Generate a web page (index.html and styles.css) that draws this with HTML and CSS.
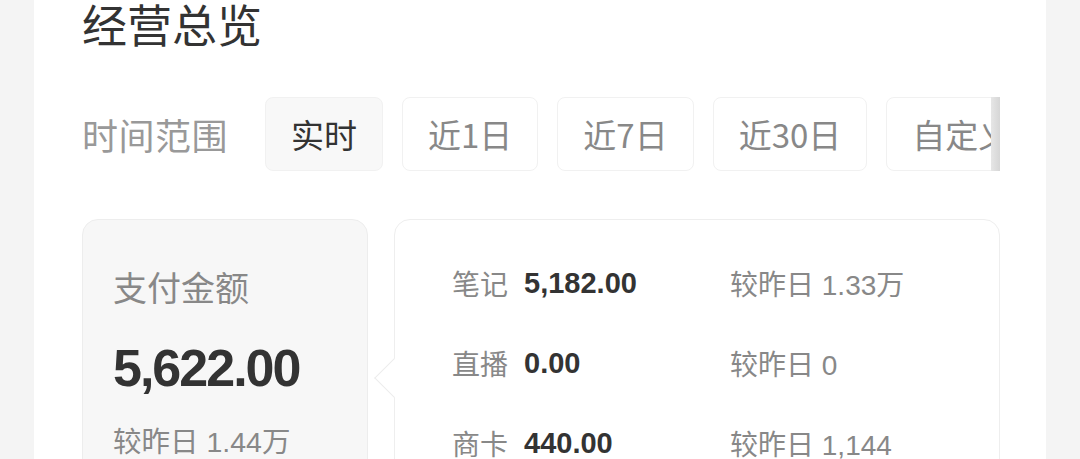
FILE: index.html
```html
<!DOCTYPE html>
<html lang="zh-CN">
<head>
<meta charset="utf-8">
<title>经营总览</title>
<link rel="stylesheet" href="styles.css">
</head>
<body>
<main class="panel">
  <h1 class="title">经营总览</h1>
  <div class="range">
    <span class="range-label">时间范围</span>
    <div class="tabs">
      <span class="tab active">实时</span>
      <span class="tab">近1日</span>
      <span class="tab">近7日</span>
      <span class="tab">近30日</span>
      <span class="tab">自定义</span>
    </div>
  </div>
  <div class="cards">
    <section class="summary">
      <div class="sum-label">支付金额</div>
      <div class="sum-value">5,622.00</div>
      <div class="sum-compare">较昨日 1.44万</div>
    </section>
    <section class="detail">
      <div class="row"><span class="lbl">笔记</span><span class="val">5,182.00</span></div>
      <div class="cmp">较昨日 1.33万</div>
      <div class="row"><span class="lbl">直播</span><span class="val">0.00</span></div>
      <div class="cmp">较昨日 0</div>
      <div class="row"><span class="lbl">商卡</span><span class="val">440.00</span></div>
      <div class="cmp">较昨日 1,144</div>
    </section>
  </div>
</main>
</body>
</html>
```
FILE: styles.css
```css
html, body {
  margin: 0;
  padding: 0;
}
body {
  width: 1080px;
  height: 459px;
  overflow: hidden;
  background: #f4f4f4;
  padding: 0 34px;
  box-sizing: border-box;
  font-family: "Liberation Sans", "Noto Sans CJK SC", sans-serif;
}
.panel {
  background: #fff;
  height: 459px;
  padding: 0 46px 0 48px;
  box-sizing: border-box;
}
.title {
  margin: 0;
  font-family: "Noto Sans CJK SC", sans-serif;
  font-weight: 400;
  font-size: 45px;
  line-height: 48px;
  color: #333;
}
.range {
  display: flex;
  align-items: center;
  margin-top: 49px;
  gap: 37px;
}
.range-label {
  font-family: "Noto Sans CJK SC", sans-serif;
  font-size: 36px;
  letter-spacing: 0.5px;
  color: #999;
  white-space: nowrap;
}
.tabs {
  position: relative;
  flex: 1;
  display: flex;
  gap: 19px;
  overflow: hidden;
}
.tabs::after {
  content: "";
  position: absolute;
  right: 0;
  top: 0;
  width: 9px;
  height: 74px;
  background: linear-gradient(to right, #e6e6e6, #d6d6d6);
}
.tab {
  flex: none;
  height: 74px;
  padding: 0 25px;
  box-sizing: border-box;
  display: flex;
  align-items: center;
  border: 1px solid #f1f1f1;
  border-radius: 8px;
  background: #fff;
  font-family: "Noto Sans CJK SC", sans-serif;
  font-size: 33px;
  color: #888;
}
.tab.active {
  background: #f8f8f8;
  color: #333;
}
.cards {
  display: flex;
  gap: 26px;
  margin-top: 48px;
}
.summary {
  width: 286px;
  height: 300px;
  box-sizing: border-box;
  background: #f7f7f7;
  border: 1px solid #ededed;
  border-radius: 16px;
  padding: 47px 0 0 30px;
}
.sum-label {
  font-family: "Noto Sans CJK SC", sans-serif;
  font-size: 34px;
  line-height: 40px;
  color: #888;
}
.sum-value {
  margin-top: 31px;
  font-size: 52px;
  line-height: 60px;
  font-weight: 700;
  letter-spacing: -2px;
  color: #333;
}
.sum-compare {
  margin-top: 26px;
  font-size: 28.5px;
  line-height: 36px;
  color: #888;
}
.detail {
  position: relative;
  width: 606px;
  height: 300px;
  box-sizing: border-box;
  background: #fff;
  border: 1px solid #eeeeee;
  border-radius: 16px;
  padding: 23px 0 0 57px;
  display: grid;
  grid-template-columns: 278px 1fr;
  grid-auto-rows: 80px;
  align-items: center;
}
.detail::before {
  content: "";
  position: absolute;
  left: -15px;
  top: 144px;
  width: 27px;
  height: 27px;
  background: #fff;
  border-left: 1px solid #ececec;
  border-bottom: 1px solid #ececec;
  transform: rotate(45deg);
}
.row {
  display: flex;
  align-items: center;
}
.lbl {
  font-family: "Noto Sans CJK SC", sans-serif;
  font-size: 28px;
  color: #888;
}
.val {
  margin-left: 16px;
  font-size: 29px;
  font-weight: 700;
  color: #333;
}
.cmp {
  font-size: 28px;
  color: #888;
}
```
